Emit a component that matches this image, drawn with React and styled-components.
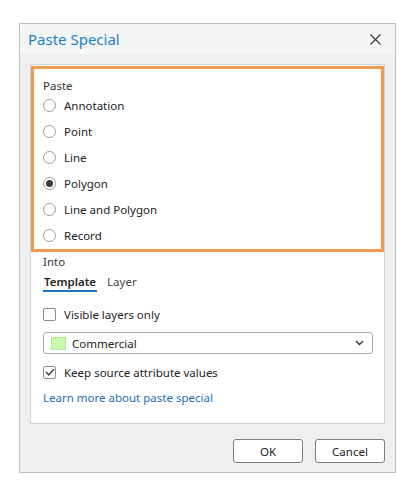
import React from 'react'
import styled, { createGlobalStyle } from 'styled-components'

const Global = createGlobalStyle`
  body {
    margin: 0;
    background: #ffffff;
    font-family: "Noto Sans", "Open Sans", sans-serif;
    color: #222;
  }
`

const Page = styled.div`
  padding: 23px 0 0 19px;
`

const Dialog = styled.div`
  width: 377px;
  height: 450px;
  box-sizing: border-box;
  border: 1px solid #bcbcbc;
  display: flex;
  flex-direction: column;
`

const TitleBar = styled.div`
  height: 30px;
  background: #f4f5f5;
  display: flex;
  align-items: center;
  justify-content: space-between;
  padding: 0 14px 0 8px;
`

const Title = styled.div`
  font-size: 15px;
  color: #1f80c6;
`

const Body = styled.div`
  flex: 1;
  background: #eeeff1;
  padding: 10px 10px 0 10px;
  display: flex;
  flex-direction: column;
`

const Panel = styled.div`
  height: 360px;
  box-sizing: border-box;
  background: #fff;
  border: 1px solid #d0d1d3;
  padding-top: 1px;
`

const Highlight = styled.div`
  border: 3px solid #ef9a4d;
  padding: 9px 9px 3px;
  display: flex;
  flex-direction: column;
  gap: 4px;
`

const Label = styled.div`
  font-size: 11.5px;
  line-height: 16px;
  color: #333;
  margin-top: ${p => p.top || 0}px;
  margin-bottom: ${p => p.bottom || 0}px;
`

const OptionRow = styled.label`
  height: 22px;
  display: flex;
  align-items: center;
  gap: 8px;
  font-size: 11.5px;
  color: #222;
`

const RadioDot = styled.span`
  width: 13px;
  height: 13px;
  box-sizing: border-box;
  border-radius: 50%;
  border: 1px solid #9a9a9a;
  background: #fff;
  display: flex;
  align-items: center;
  justify-content: center;
  &::after {
    content: '';
    width: 7px;
    height: 7px;
    border-radius: 50%;
    background: ${p => (p.on ? '#3a3a3a' : 'transparent')};
  }
`

const Lower = styled.div`
  padding: 0 11px 0 12px;
  display: flex;
  flex-direction: column;
`

const Tabs = styled.div`
  display: flex;
  gap: 9px;
  margin-top: 4px;
`

const Tab = styled.div`
  font-size: 11.5px;
  line-height: 16px;
  padding: 0 1px;
  font-weight: ${p => (p.active ? 600 : 400)};
  color: ${p => (p.active ? '#222' : '#444')};
  border-bottom: 2px solid ${p => (p.active ? '#1b74b9' : 'transparent')};
`

const CheckRow = styled.div`
  height: 16px;
  display: flex;
  align-items: center;
  gap: 8px;
  font-size: 11.5px;
  color: #222;
  margin-top: ${p => p.top}px;
`

const Box = styled.span`
  width: 13px;
  height: 13px;
  box-sizing: border-box;
  border: 1px solid #8c8c8c;
  border-radius: 2px;
  background: #fff;
  display: flex;
  align-items: center;
  justify-content: center;
`

const Select = styled.div`
  margin-top: 10px;
  height: 22px;
  box-sizing: border-box;
  border: 1px solid #a9a9a9;
  border-radius: 3px;
  display: flex;
  align-items: center;
  padding: 0 8px 0 7px;
  font-size: 11.5px;
  color: #222;
`

const Swatch = styled.span`
  width: 15px;
  height: 13px;
  background: #c9fcaa;
  border: 1px solid #b4e898;
  box-sizing: border-box;
  margin-right: 6px;
`

const Grow = styled.span`
  flex: 1;
`

const Link = styled.a`
  margin-top: 10px;
  font-size: 11.5px;
  line-height: 16px;
  color: #1c6fb0;
  text-decoration: none;
`

const Footer = styled.div`
  display: flex;
  justify-content: flex-end;
  gap: 12px;
  margin-top: 15px;
`

const Button = styled.button`
  width: 70px;
  height: 24px;
  border: 1px solid #7d7d7d;
  border-radius: 3px;
  background: #fff;
  font-family: inherit;
  font-size: 11.5px;
  color: #222;
  padding: 0;
`

const options = ['Annotation', 'Point', 'Line', 'Polygon', 'Line and Polygon', 'Record']

export default function App() {
  return (
    <Page>
      <Global />
      <Dialog>
        <TitleBar>
          <Title>Paste Special</Title>
          <svg width="11" height="11" viewBox="0 0 11 11">
            <path d="M0.5 0.5L10.5 10.5M10.5 0.5L0.5 10.5" stroke="#333" strokeWidth="1.1" />
          </svg>
        </TitleBar>
        <Body>
          <Panel>
            <Highlight>
              <Label bottom={-4}>Paste</Label>
              {options.map(o => (
                <OptionRow key={o}>
                  <RadioDot on={o === 'Polygon'} />
                  {o}
                </OptionRow>
              ))}
            </Highlight>
            <Lower>
              <Label top={2}>Into</Label>
              <Tabs>
                <Tab active>Template</Tab>
                <Tab>Layer</Tab>
              </Tabs>
              <CheckRow top={14}>
                <Box />
                Visible layers only
              </CheckRow>
              <Select>
                <Swatch />
                <Grow>Commercial</Grow>
                <svg width="9" height="6" viewBox="0 0 9 6">
                  <path d="M1 1l3.5 3.5L8 1" fill="none" stroke="#333" strokeWidth="1.4" />
                </svg>
              </Select>
              <CheckRow top={10}>
                <Box>
                  <svg width="10" height="8" viewBox="0 0 10 8">
                    <path d="M1 4l2.8 2.8L9 1.2" fill="none" stroke="#444" strokeWidth="1.5" />
                  </svg>
                </Box>
                Keep source attribute values
              </CheckRow>
              <Link>Learn more about paste special</Link>
            </Lower>
          </Panel>
          <Footer>
            <Button>OK</Button>
            <Button>Cancel</Button>
          </Footer>
        </Body>
      </Dialog>
    </Page>
  )
}
